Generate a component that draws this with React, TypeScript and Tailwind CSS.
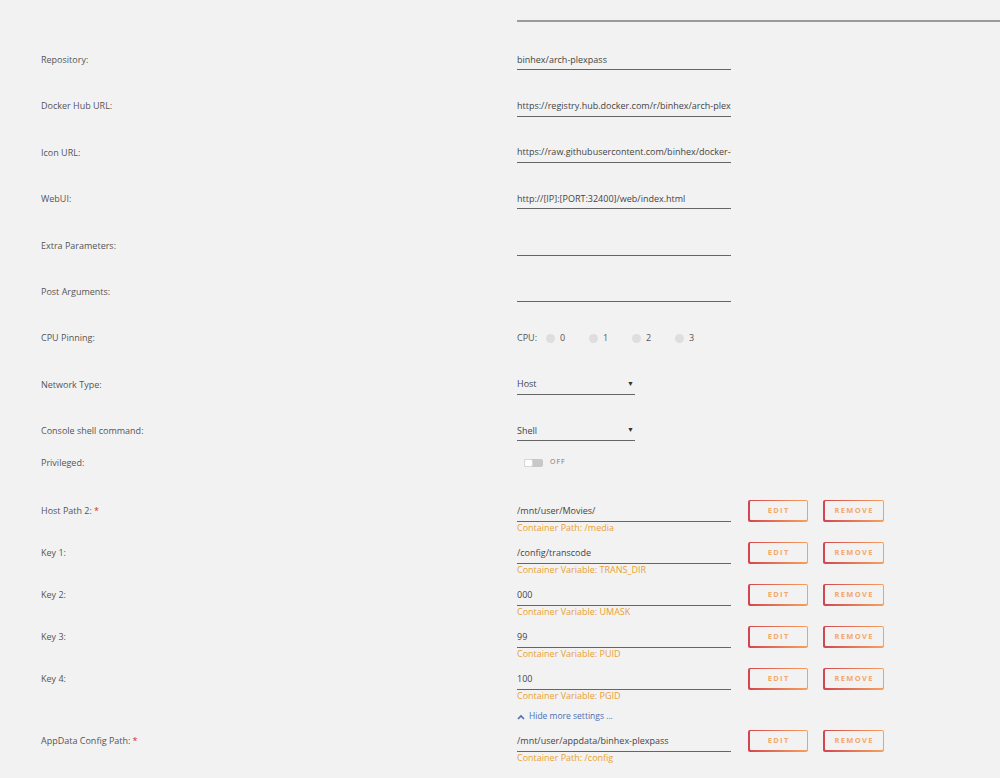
import { FC, ReactNode } from "react";

const font = { fontFamily: '"Open Sans", "Noto Sans", sans-serif' };

const Label: FC<{ children: ReactNode; required?: boolean }> = ({ children, required }) => (
  <div className="w-[517px] shrink-0 pl-[41px] text-[9px] text-[#555]">
    {children}
    {required && <span className="ml-[2px] text-[#e22828]">*</span>}
  </div>
);

const Input: FC<{ value?: string }> = ({ value }) => (
  <div className="flex h-[21px] w-[214px] items-center overflow-hidden whitespace-nowrap border-b border-[#666] text-[9px] text-[#444]">
    {value}
  </div>
);

const Row: FC<{ label: string; children: ReactNode }> = ({ label, children }) => (
  <div className="flex h-[46.4px] items-center">
    <Label>{label}</Label>
    {children}
  </div>
);

const Select: FC<{ value: string }> = ({ value }) => (
  <div className="flex h-[21px] w-[118px] items-center justify-between border-b border-[#666] pr-[1px] text-[9px] text-[#444]">
    <span>{value}</span>
    <span className="text-[7px] text-[#333]">▼</span>
  </div>
);

const Btn: FC<{ text: string; w: string }> = ({ text, w }) => (
  <div className={`${w} h-[22px] rounded-[2px] bg-gradient-to-r from-[#d2444f] to-[#f6a15c] p-[1.5px]`}>
    <div className="flex h-full w-full items-center justify-center rounded-[1px] bg-[#f2f2f2] pl-[1.3px] text-[7.5px] font-bold tracking-[1.3px] text-[#f2a86c]">
      {text}
    </div>
  </div>
);

const PathRow: FC<{ label: string; value: string; sub: string; required?: boolean; last?: boolean }> = ({
  label,
  value,
  sub,
  required,
  last,
}) => (
  <div className={`flex items-start ${last ? "" : "pb-[9px]"}`}>
    <div className="flex h-[21px] items-center">
      <Label required={required}>{label}</Label>
    </div>
    <div className="w-[214px]">
      <Input value={value} />
      <div className="h-[12px] text-[9px] leading-[12px] text-[#eaa032]">{sub}</div>
    </div>
    <div className="-mt-[1px] ml-[17px] flex gap-[15px]">
      <Btn text="EDIT" w="w-[60px]" />
      <Btn text="REMOVE" w="w-[61px]" />
    </div>
  </div>
);

const Cpu: FC<{ n: number }> = ({ n }) => (
  <div className="flex w-[43px] items-center">
    <span className="h-[9px] w-[9px] rounded-full bg-[#dedede]" />
    <span className="ml-[5px] text-[9px] text-[#555]">{n}</span>
  </div>
);

export default function App() {
  return (
    <div className="min-h-[778px] w-[1000px] overflow-hidden bg-[#f2f2f2]" style={font}>
      <div className="flex h-[36.6px]">
        <div className="w-[517px] shrink-0" />
        <div className="mt-[19.5px] h-[2px] flex-1 bg-[#9a9a9a]" />
      </div>
      <Row label="Repository:">
        <Input value="binhex/arch-plexpass" />
      </Row>
      <Row label="Docker Hub URL:">
        <Input value="https://registry.hub.docker.com/r/binhex/arch-plexpass/" />
      </Row>
      <Row label="Icon URL:">
        <Input value="https://raw.githubusercontent.com/binhex/docker-templates/master/binhex/images/plexpass-icon.png" />
      </Row>
      <Row label="WebUI:">
        <Input value="http://[IP]:[PORT:32400]/web/index.html" />
      </Row>
      <Row label="Extra Parameters:">
        <Input />
      </Row>
      <Row label="Post Arguments:">
        <Input />
      </Row>
      <Row label="CPU Pinning:">
        <div className="flex items-center text-[9px] text-[#555]">
          <span className="w-[29px]">CPU:</span>
          <Cpu n={0} />
          <Cpu n={1} />
          <Cpu n={2} />
          <Cpu n={3} />
        </div>
      </Row>
      <Row label="Network Type:">
        <Select value="Host" />
      </Row>
      <Row label="Console shell command:">
        <Select value="Shell" />
      </Row>
      <div className="flex h-[17px] items-center">
        <Label>Privileged:</Label>
        <div className="ml-[7px] flex items-center">
          <div className="flex h-[8px] w-[19px] rounded-[2px] bg-[#c8c8c8]">
            <div className="h-[8px] w-[9px] rounded-[2px] border border-[#d6d6d6] bg-white" />
          </div>
          <span className="ml-[7px] text-[7px] tracking-[1px] text-[#777]">OFF</span>
        </div>
      </div>
      <div className="mt-[29.4px]">
        <PathRow label="Host Path 2:" required value="/mnt/user/Movies/" sub="Container Path: /media" />
        <PathRow label="Key 1:" value="/config/transcode" sub="Container Variable: TRANS_DIR" />
        <PathRow label="Key 2:" value="000" sub="Container Variable: UMASK" />
        <PathRow label="Key 3:" value="99" sub="Container Variable: PUID" />
        <PathRow label="Key 4:" value="100" sub="Container Variable: PGID" last />
      </div>
      <div className="mt-[9px] flex h-[12px] items-center">
        <div className="w-[517px] shrink-0" />
        <div className="flex items-center text-[8.5px] text-[#4a6fb5]">
          <svg width="8" height="6" viewBox="0 0 8 6" className="mr-[4px]">
            <path d="M1 5 L4 2 L7 5" fill="none" stroke="#4a6fb5" strokeWidth="1.6" />
          </svg>
          Hide more settings ...
        </div>
      </div>
      <div className="mt-[8px]">
        <PathRow label="AppData Config Path:" required value="/mnt/user/appdata/binhex-plexpass" sub="Container Path: /config" last />
      </div>
    </div>
  );
}
